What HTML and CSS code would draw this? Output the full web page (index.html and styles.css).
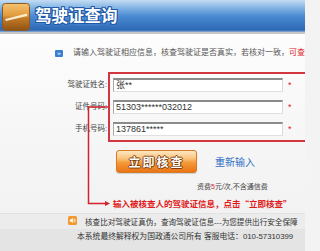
FILE: index.html
```html
<!DOCTYPE html>
<html lang="zh-CN">
<head>
<meta charset="utf-8">
<title>驾驶证查询</title>
<link rel="stylesheet" href="styles.css">
</head>
<body>
<div class="page">
  <header class="banner">
    <svg class="logo" viewBox="0 0 28 28" width="28" height="28">
      <defs>
        <linearGradient id="lg" x1="0" y1="0" x2="0" y2="1">
          <stop offset="0" stop-color="#f6c470"/>
          <stop offset="0.45" stop-color="#e09a3c"/>
          <stop offset="0.55" stop-color="#c27a26"/>
          <stop offset="1" stop-color="#8e5214"/>
        </linearGradient>
      </defs>
      <rect x="0.5" y="0.5" width="27" height="27" rx="3" fill="url(#lg)" stroke="#8a5a22" stroke-width="1"/>
      <path d="M3 16 L25 10.5 L25 13 L4 18 Z" fill="#fff6dc" opacity="0.9"/>
    </svg>
    <h1 class="title">驾驶证查询</h1>
  </header>

  <main class="main">
    <p class="intro"><span class="intro-icon">»</span><span class="intro-text">请输入驾驶证相应信息，核查驾驶证是否真实，若核对一致，<span class="red">可查</span></span></p>

    <div class="form">
      <div class="labels">
        <div class="label">驾驶证姓名:</div>
        <div class="label">证件号码:</div>
        <div class="label">手机号码:</div>
      </div>
      <div class="box">
        <div class="row"><div class="input">张**</div><span class="req">*</span></div>
        <div class="row"><div class="input">51303******032012</div><span class="req">*</span></div>
        <div class="row"><div class="input">137861*****</div><span class="req">*</span></div>
      </div>
    </div>

    <div class="actions">
      <button class="btn" type="button">立即核查</button>
      <span class="reset">重新输入</span>
    </div>

    <p class="fee">资费<span class="red">5</span>元/次,不含通信费</p>
    <p class="hint">输入被核查人的驾驶证信息，点击“立即核查”</p>
  </main>

  <footer class="footer">
    <div class="band1">
      <svg class="spk" viewBox="0 0 9 9" width="9" height="9">
        <rect x="0" y="0" width="9" height="9" rx="1.5" fill="#f29a2e"/>
        <path d="M1.8 3.5 H3 L4.8 2 V7 L3 5.5 H1.8 Z" fill="#fff"/>
        <path d="M5.8 3.3 Q6.6 4.5 5.8 5.7" stroke="#fff" stroke-width="0.7" fill="none"/>
        <path d="M6.7 2.6 Q7.9 4.5 6.7 6.4" stroke="#fff" stroke-width="0.7" fill="none"/>
      </svg>
      <span class="band-text">核查比对驾驶证真伪，查询驾驶证信息---为您提供出行安全保障</span>
    </div>
    <div class="band2">本系统最终解释权为国政通公司所有 客服电话：010-57310399</div>
  </footer>

  <svg class="connector" width="305" height="251" viewBox="0 0 305 251">
    <path d="M108 107 H88.5 V203.5 H106" stroke="#d2232c" stroke-width="1.5" fill="none"/>
    <path d="M105 201 L110 203.5 L105 206 Z" fill="#d2232c"/>
  </svg>
</div>
</body>
</html>
```

FILE: styles.css
```css
html, body {
  margin: 0;
  padding: 0;
}
html {
  overflow: hidden;
}
body {
  width: 305px;
  height: 251px;
  overflow: hidden;
  font-family: "Liberation Sans", "Noto Sans CJK SC", sans-serif;
  background: #f3f3f3;
  color: #333;
}
.page {
  position: relative;
  width: 305px;
  height: 251px;
  display: flex;
  flex-direction: column;
}

/* header banner */
.banner {
  flex: none;
  height: 32px;
  border-bottom: 2px solid #c6c6c6;
  background: linear-gradient(to bottom, #c4dcf3 0%, #8ab8e6 22%, #4b8bd2 50%, #3674c0 80%, #2e68b2 94%, #8fb0d8 100%);
  display: flex;
  align-items: center;
}
.logo {
  flex: none;
  margin-left: 2px;
  margin-top: 2px;
}
.title {
  margin: -3px 0 0 5px;
  font-family: "Noto Sans CJK SC", sans-serif;
  font-weight: 700;
  font-size: 16.5px;
  line-height: 20px;
  color: #fff;
  text-shadow: 1px 0 #1f5aa8, -1px 0 #1f5aa8, 0 1px #1f5aa8, 0 -1px #1f5aa8,
    1px 1px #1f5aa8, -1px -1px #1f5aa8, 1px -1px #1f5aa8, -1px 1px #1f5aa8,
    0 0 3px #9cc4ee;
}

/* main */
.main {
  flex: 1;
  display: flex;
  flex-direction: column;
  background: linear-gradient(to bottom, #fdfdfd 0%, #f7f7f7 50%, #f2f2f2 100%);
}
.red {
  color: #e0222a;
}
.intro {
  margin: 13px 0 0 0;
  padding-left: 55px;
  height: 12px;
  display: flex;
  align-items: center;
  white-space: nowrap;
  overflow: hidden;
}
.intro-icon {
  flex: none;
  width: 8px;
  height: 7px;
  background: #3a80d2;
  border-radius: 1px;
  color: #fff;
  font-size: 6px;
  line-height: 7px;
  text-align: center;
}
.intro-text {
  margin-left: 10px;
  font-size: 8px;
  line-height: 12px;
  color: #555;
}

/* form */
.form {
  margin-top: 13px;
  display: flex;
}
.labels {
  flex: none;
  width: 107px;
  padding-top: 2px;
  padding-right: 1px;
}
.label {
  height: 22px;
  line-height: 22px;
  text-align: right;
  font-size: 7.5px;
  color: #444;
}
.box {
  flex: none;
  width: 210px;
  border: 2px solid #d2363e;
  padding-left: 3px;
}
.row {
  height: 22px;
  display: flex;
  align-items: center;
}
.input {
  box-sizing: border-box;
  width: 170px;
  height: 14px;
  background: #fff;
  border-top: 2px solid #8b8b8b;
  border-left: 1px solid #a8a8a8;
  border-right: 1px solid #dadada;
  border-bottom: 1px solid #e0e0e0;
  padding-left: 2px;
  font-size: 9px;
  line-height: 11px;
  color: #333;
}
.req {
  margin-left: 5px;
  font-size: 9px;
  color: #e0222a;
}

/* actions */
.actions {
  margin-top: 8px;
  display: flex;
  align-items: center;
}
.btn {
  margin: 0 0 0 116px;
  padding: 0;
  width: 81px;
  height: 23px;
  border: 1px solid #d77a28;
  border-radius: 3px;
  background: linear-gradient(to bottom, #fde7c4 0%, #fbc57e 35%, #f39a3a 55%, #ea7414 100%);
  font-family: "Noto Sans CJK SC", sans-serif;
  font-weight: 700;
  font-size: 12px;
  letter-spacing: 2px;
  color: #fff;
  text-shadow: 1px 0 #7b3c0c, -1px 0 #7b3c0c, 0 1px #7b3c0c, 0 -1px #7b3c0c;
  box-shadow: 0 1px 1px rgba(0, 0, 0, 0.15);
}
.reset {
  margin-left: 18px;
  font-family: "Noto Sans CJK SC", sans-serif;
  font-size: 10px;
  color: #3070c4;
}
.fee {
  margin: 9px 0 0 197px;
  font-size: 7px;
  line-height: 10px;
  color: #444;
  white-space: nowrap;
}
.hint {
  margin: 5px 0 0 113px;
  font-family: "Noto Sans CJK SC", sans-serif;
  font-weight: 700;
  font-size: 8.5px;
  line-height: 12px;
  color: #e01a1a;
  white-space: nowrap;
}

/* footer */
.footer {
  flex: none;
  height: 38px;
}
.band1 {
  height: 16px;
  box-sizing: border-box;
  border-top: 1px solid #e2e2e2;
  background: #ececec;
  display: flex;
  align-items: center;
  padding-left: 68px;
  white-space: nowrap;
  overflow: hidden;
}
.spk {
  flex: none;
  margin-top: -3px;
}
.band-text {
  margin-left: 8px;
  font-size: 7.6px;
  color: #333;
}
.band2 {
  height: 22px;
  box-sizing: border-box;
  background: #e4e4e4;
  padding: 2px 0 0 77px;
  font-size: 7.8px;
  line-height: 12px;
  color: #333;
  white-space: nowrap;
}

/* annotation overlay */
.connector {
  position: absolute;
  left: 0;
  top: 0;
  pointer-events: none;
}
```
